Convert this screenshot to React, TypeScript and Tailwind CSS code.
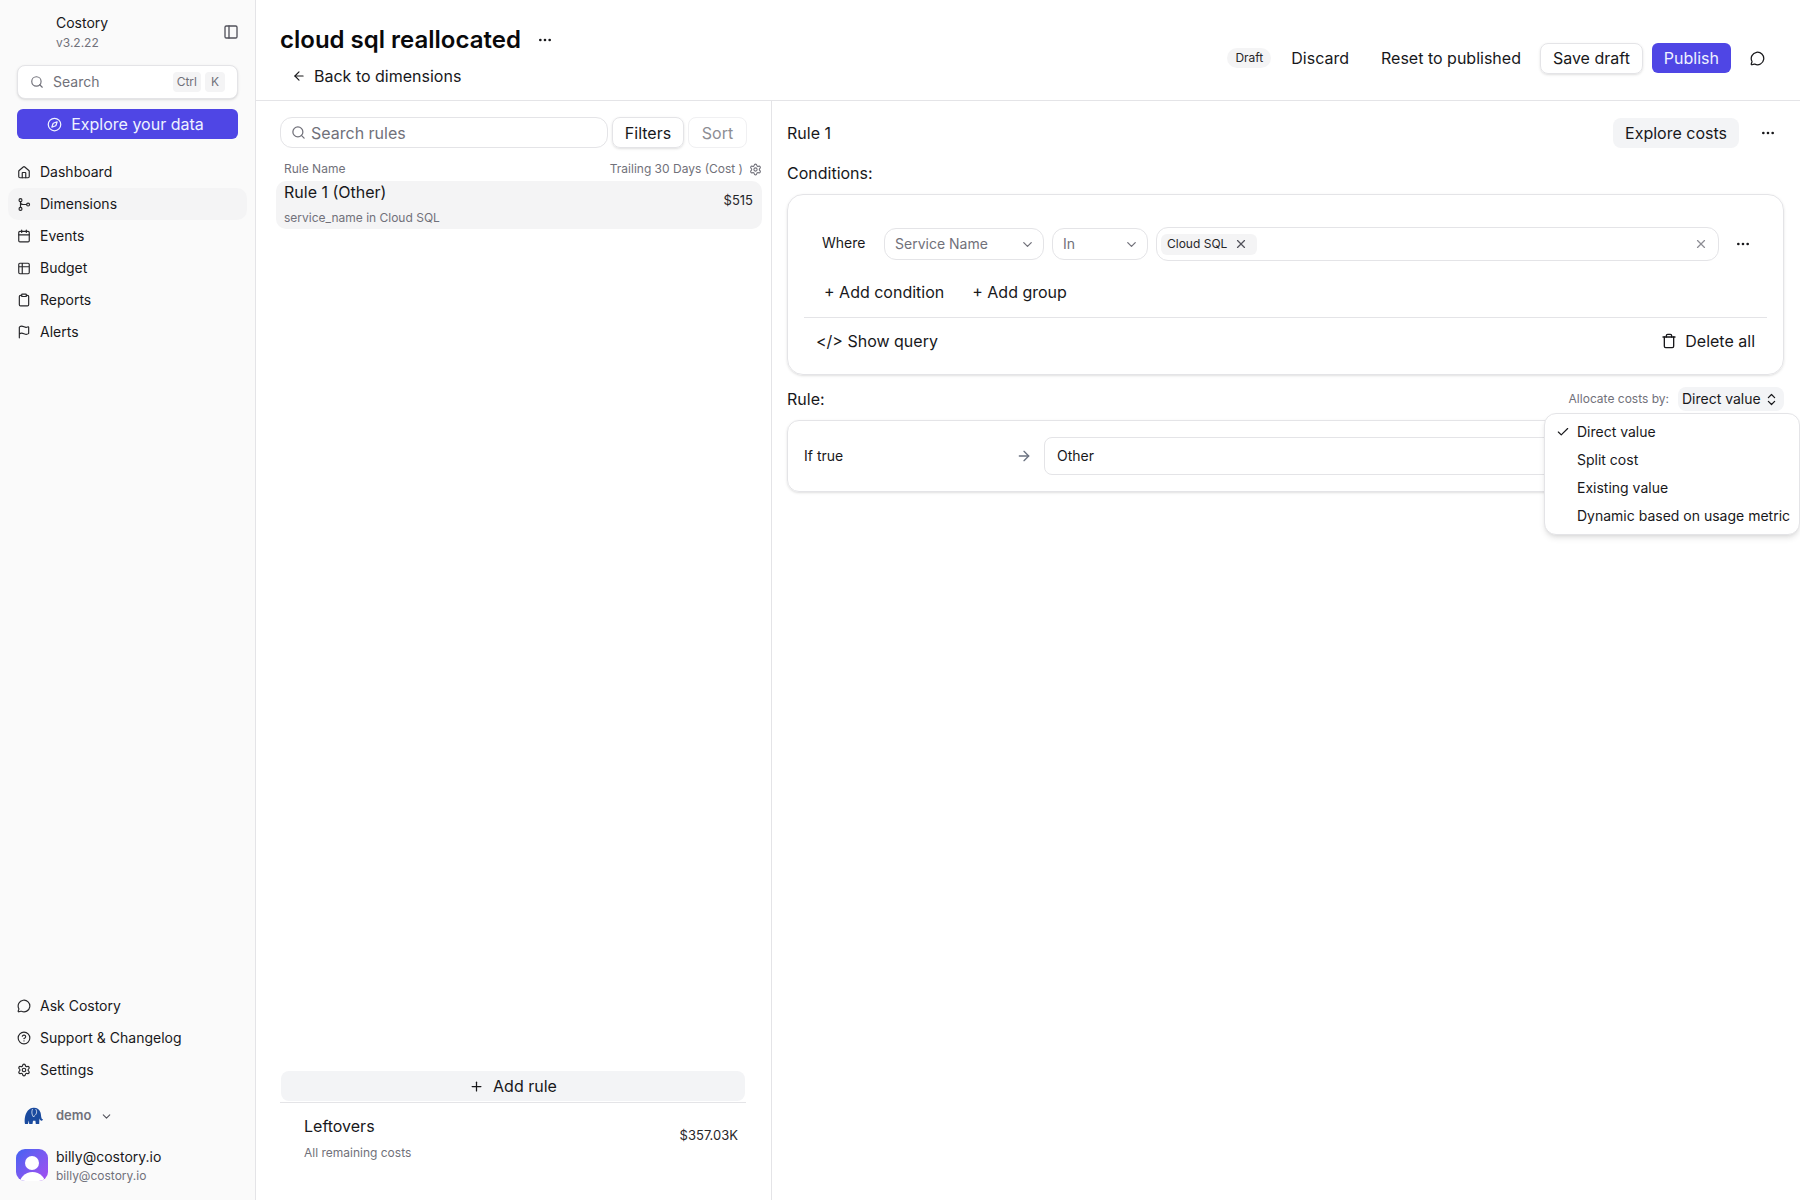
import React from 'react';
import {
  House, Calendar, Table2, Clipboard, Flag, MessageCircle, CircleHelp, Settings, Compass, PanelLeft,
  Search, ChevronDown, X, Ellipsis, ArrowLeft, ArrowRight, Plus, Trash, ChevronsUpDown, Check,
} from 'lucide-react';

const DimensionsIcon = () => (
  <svg width="15" height="15" viewBox="0 0 24 24" fill="none" stroke="currentColor" strokeWidth="2" strokeLinecap="round" strokeLinejoin="round">
    <circle cx="6" cy="4.5" r="2.5" />
    <circle cx="6" cy="19.5" r="2.5" />
    <circle cx="19" cy="12" r="2.5" />
    <path d="M6 7v10" />
    <path d="M6 8c0 2.5 2 4 4.5 4h6" />
  </svg>
);

const ElephantLogo = () => (
  <svg width="20" height="20" viewBox="0 0 20 20">
    <path
      fill="#1a4a9e"
      d="M1 18c-.5-2-.5-4.500 0-7C2 6 5 2 9.500 1.800c3.500-.2 6 1.700 7 4.700.6 2 .5 4 1 5.500.3 1 .9 1.400 1.500 1.500-.2 1-1.200 1.500-2.200 1-.8-.4-1.200-1.200-1.400-2.200l-.2 5.700h-3.400l-.4-3.300H9l-.5 3.300H5.200l-.3-3.500-1 3.500H1z"
    />
    <path fill="none" stroke="#ffffff" strokeWidth="0.7" d="M8.500 3c-1 2.500-1 5.500 1 8 .8-1.500 2.500-2 3-4 .3-1.500 0-3-1-4" />
  </svg>
);

const NavItem = ({ icon, label, active }: { icon: React.ReactNode; label: string; active?: boolean }) => (
  <div className={`mx-2 h-8 flex items-center gap-[9px] px-[9px] rounded-[10px] text-sm text-[#18181b] ${active ? 'bg-[#f4f4f5]' : ''}`}>
    <span className="w-[14px] flex justify-center text-[#27272a]">{icon}</span>
    {label}
  </div>
);

const Sidebar = () => (
  <div className="w-[256px] shrink-0 h-full bg-[#fafafa] border-r border-[#e4e4e7] flex flex-col">
    <div className="h-[65px] pt-[14px] pl-[56px] pr-[16px] flex justify-between">
      <div>
        <div className="text-sm leading-[18px] text-[#18181b]">Costory</div>
        <div className="text-xs leading-[18px] mt-[2px] text-[#71717a]">v3.2.22</div>
      </div>
      <PanelLeft size={16} className="mt-[10px] text-[#52525b]" />
    </div>
    <div className="mx-[17px] h-[34px] bg-white border border-[#e4e4e7] rounded-lg shadow-sm flex items-center pl-[12px] pr-[12px] text-sm text-[#71717a]">
      <Search size={14} className="text-[#71717a]" />
      <span className="ml-[9px] flex-1">Search</span>
      <span className="px-[4px] h-5 flex items-center bg-[#f4f4f5] rounded text-xs">Ctrl</span>
      <span className="ml-1 px-[6px] h-5 flex items-center bg-[#f4f4f5] rounded text-xs">K</span>
    </div>
    <div className="mx-[17px] mt-[10px] h-[30px] pr-1 bg-[#4f46e5] rounded-md flex items-center justify-center gap-[9px] text-base text-[#eef2ff]">
      <Compass size={15} />
      Explore your data
    </div>
    <div className="mt-[17px] flex flex-col">
      <NavItem icon={<House size={15} />} label="Dashboard" />
      <NavItem icon={<DimensionsIcon />} label="Dimensions" active />
      <NavItem icon={<Calendar size={14} />} label="Events" />
      <NavItem icon={<Table2 size={15} />} label="Budget" />
      <NavItem icon={<Clipboard size={14} />} label="Reports" />
      <NavItem icon={<Flag size={14} />} label="Alerts" />
    </div>
    <div className="flex-1" />
    <div className="flex flex-col">
      <NavItem icon={<MessageCircle size={14} />} label="Ask Costory" />
      <NavItem icon={<CircleHelp size={14} />} label="Support & Changelog" />
      <NavItem icon={<Settings size={14} />} label="Settings" />
    </div>
    <div className="mt-[18px] h-6 pl-[24px] flex items-center text-[13px] font-semibold text-[#71717a]">
      <ElephantLogo />
      <span className="ml-[12px]">demo</span>
      <ChevronDown size={13} className="ml-[9px] text-[#52525b]" />
    </div>
    <div className="mt-[17px] mb-[15px] pl-[16px] flex items-center gap-2">
      <div className="relative w-8 h-8 rounded-[9px] overflow-hidden bg-gradient-to-br from-[#3f62f2] to-[#a34cf0] flex justify-center">
        <div className="absolute top-[7px] w-[14px] h-[14px] rounded-full bg-white" />
        <div className="absolute top-[23px] w-[27px] h-[16px] rounded-t-full bg-white" />
      </div>
      <div className="mt-[2px]">
        <div className="text-sm leading-[19px] text-[#18181b]">billy@costory.io</div>
        <div className="text-xs leading-[19px] text-[#71717a]">billy@costory.io</div>
      </div>
    </div>
  </div>
);

const Header = () => (
  <div className="h-[101px] shrink-0 border-b border-[#e4e4e7] flex justify-between bg-white">
    <div className="pl-6 pt-[24px]">
      <div className="flex items-center h-8">
        <span className="text-2xl font-semibold text-[#09090b]">cloud sql reallocated</span>
        <Ellipsis size={16} className="ml-[16px] text-[#18181b]" />
      </div>
      <div className="mt-[8px] pl-[12px] flex items-center gap-[8px] h-6 text-base text-[#18181b]">
        <ArrowLeft size={14} />
        Back to dimensions
      </div>
    </div>
    <div className="pr-[35px] flex items-center gap-[7px] pt-[16px]">
      <span className="h-5 w-11 flex items-center justify-center rounded-full bg-[#f4f4f5] text-xs text-[#27272a]">Draft</span>
      <span className="ml-[1px] px-3 text-base text-[#18181b]">Discard</span>
      <span className="pl-[13px] pr-3 text-base text-[#18181b]">Reset to published</span>
      <span className="h-[31px] px-3 flex items-center border border-[#e4e4e7] rounded-lg shadow-sm text-base text-[#18181b]">Save draft</span>
      <span className="ml-[2px] h-[30px] px-3 flex items-center bg-[#4f46e5] rounded-md text-base text-[#eef2ff]">Publish</span>
      <MessageCircle size={15} className="ml-[12px] text-[#18181b]" />
    </div>
  </div>
);

const RulesPanel = () => (
  <div className="w-[516px] shrink-0 border-r border-[#e4e4e7] flex flex-col">
    <div className="mt-4 pl-6 pr-[24px] flex gap-[4px]">
      <div className="flex-1 h-[31px] border border-[#e4e4e7] rounded-xl flex items-center pl-[10px] text-base text-[#71717a]">
        <Search size={15} />
        <span className="ml-[5px]">Search rules</span>
      </div>
      <span className="h-[31px] w-[72px] flex items-center justify-center border border-[#e4e4e7] rounded-lg shadow-sm text-base text-[#18181b]">Filters</span>
      <span className="h-[31px] w-[59px] flex items-center justify-center border border-[#f0f0f2] rounded-lg text-base text-[#8d8d94]">Sort</span>
    </div>
    <div className="mt-[13px] pl-[28px] pr-[9px] flex justify-between items-center h-[16px] text-xs text-[#71717a]">
      <span>Rule Name</span>
      <span className="flex items-center gap-[6px]">
        Trailing 30 Days (Cost )
        <Settings size={13} />
      </span>
    </div>
    <div className="ml-5 mr-[9px] mt-[4px] h-[48px] rounded-[10px] bg-[#f4f4f5] pt-[1px] pl-[8px] pr-[9px] flex justify-between items-start">
      <div>
        <div className="text-base leading-[20px] text-[#18181b]">Rule 1 (Other)</div>
        <div className="mt-[7px] text-xs leading-[18px] text-[#71717a]">service_name in Cloud SQL</div>
      </div>
      <span className="mt-[9px] text-[13px] leading-[18px] text-[#27272a]">$515</span>
    </div>
    <div className="flex-1" />
    <div className="ml-[25px] mr-[26px] h-[30px] rounded-lg bg-[#f3f4f6] flex items-center justify-center gap-[9px] text-base text-[#18181b]">
      <Plus size={15} />
      Add rule
    </div>
    <div className="mt-[1px] ml-6 mr-[25px] h-[98px] border-t border-[#e4e4e7] pl-[24px] pr-2 pt-[12px] flex justify-between">
      <div>
        <div className="text-base leading-[22px] text-[#18181b]">Leftovers</div>
        <div className="mt-[7px] text-xs leading-[18px] text-[#71717a]">All remaining costs</div>
      </div>
      <span className="mt-[11px] text-[13px] leading-[18px] text-[#27272a]">$357.03K</span>
    </div>
  </div>
);

const MenuItem = ({ label, checked }: { label: string; checked?: boolean }) => (
  <div className="h-7 flex items-center text-sm text-[#18181b]">
    <span className="w-8 pl-[11px] shrink-0">{checked && <Check size={14} />}</span>
    {label}
  </div>
);

const RuleEditor = () => (
  <div className="relative flex-1 pl-[15px] pr-[16px]">
    <div className="mt-[17px] flex justify-between items-center h-[30px]">
      <span className="text-base text-[#18181b]">Rule 1</span>
      <div className="flex items-center">
        <span className="h-[30px] px-3 flex items-center rounded-lg bg-[#f3f4f6] text-base text-[#18181b]">Explore costs</span>
        <Ellipsis size={16} className="ml-[21px] mr-[8px] text-[#18181b]" />
      </div>
    </div>
    <div className="mt-[13px] text-base leading-[24px] text-[#18181b]">Conditions:</div>
    <div className="mt-[9px] h-[181px] border border-[#e4e4e7] rounded-2xl shadow-sm px-[16px] pt-[32px]">
      <div className="flex items-center">
        <span className="ml-[18px] w-[62px] -mt-[2px] text-sm text-[#18181b]">Where</span>
        <div className="w-[160px] h-[32px] border border-[#e4e4e7] rounded-xl flex items-center justify-between pl-[10px] pr-[8px] text-sm text-[#71717a]">
          Service Name
          <ChevronDown size={15} />
        </div>
        <div className="ml-2 w-[96px] h-[32px] border border-[#e4e4e7] rounded-xl flex items-center justify-between pl-[10px] pr-[8px] text-sm text-[#71717a]">
          In
          <ChevronDown size={15} />
        </div>
        <div className="ml-2 w-[563px] h-[34px] border border-[#e4e4e7] rounded-xl flex items-center justify-between pl-[4px] pr-[10px]">
          <span className="h-[21px] w-[96px] rounded-md bg-[#f4f4f5] flex items-center pl-[6px] gap-[7px] text-xs text-[#27272a]">
            Cloud SQL
            <X size={14} className="text-[#52525b]" />
          </span>
          <X size={14} className="text-[#8d8d94]" />
        </div>
        <Ellipsis size={16} className="ml-[16px] text-[#18181b]" />
      </div>
      <div className="mt-[19px] ml-[20px] flex gap-[28px] text-base leading-[24px] text-[#18181b]">
        <span>+ Add condition</span>
        <span>+ Add group</span>
      </div>
      <div className="mt-[13px] border-t border-[#e4e4e7] pt-[11px] pl-[12px] pr-[12px] flex justify-between items-center text-base leading-[24px] text-[#18181b]">
        <span>&lt;/&gt; Show query</span>
        <span className="flex items-center gap-[8px]">
          <Trash size={16} />
          Delete all
        </span>
      </div>
    </div>
    <div className="mt-[11px] h-[26px] flex justify-between items-center">
      <span className="text-base text-[#18181b]">Rule:</span>
      <div className="flex items-center gap-[9px]">
        <span className="text-xs text-[#71717a]">Allocate costs by:</span>
        <span className="h-[24px] w-[106px] rounded-lg bg-[#f3f4f6] flex items-center justify-between pl-[4px] pr-[5px] text-sm text-[#18181b]">
          Direct value
          <ChevronsUpDown size={15} />
        </span>
      </div>
    </div>
    <div className="mt-[8px] h-[72px] border border-[#e4e4e7] rounded-xl shadow-sm flex items-center pl-[16px] pr-[16px]">
      <span className="w-[212px] text-sm text-[#18181b]">If true</span>
      <ArrowRight size={16} className="text-[#6b7280]" />
      <div className="ml-[12px] flex-1 h-[38px] border border-[#e4e4e7] rounded-lg flex items-center pl-[12px] text-sm text-[#18181b]">Other</div>
    </div>
    <div className="absolute top-[312px] right-0 w-[256px] h-[122px] bg-white border border-[#e4e4e7] rounded-xl shadow-md pt-[4px]">
      <MenuItem label="Direct value" checked />
      <MenuItem label="Split cost" />
      <MenuItem label="Existing value" />
      <MenuItem label="Dynamic based on usage metric" />
    </div>
  </div>
);

const App: React.FC = () => (
  <div className="w-full h-screen flex overflow-hidden bg-white font-['Inter','Liberation_Sans',sans-serif]">
    <Sidebar />
    <div className="flex-1 min-w-0 flex flex-col">
      <Header />
      <div className="flex-1 min-h-0 flex">
        <RulesPanel />
        <RuleEditor />
      </div>
    </div>
  </div>
);

export default App;
